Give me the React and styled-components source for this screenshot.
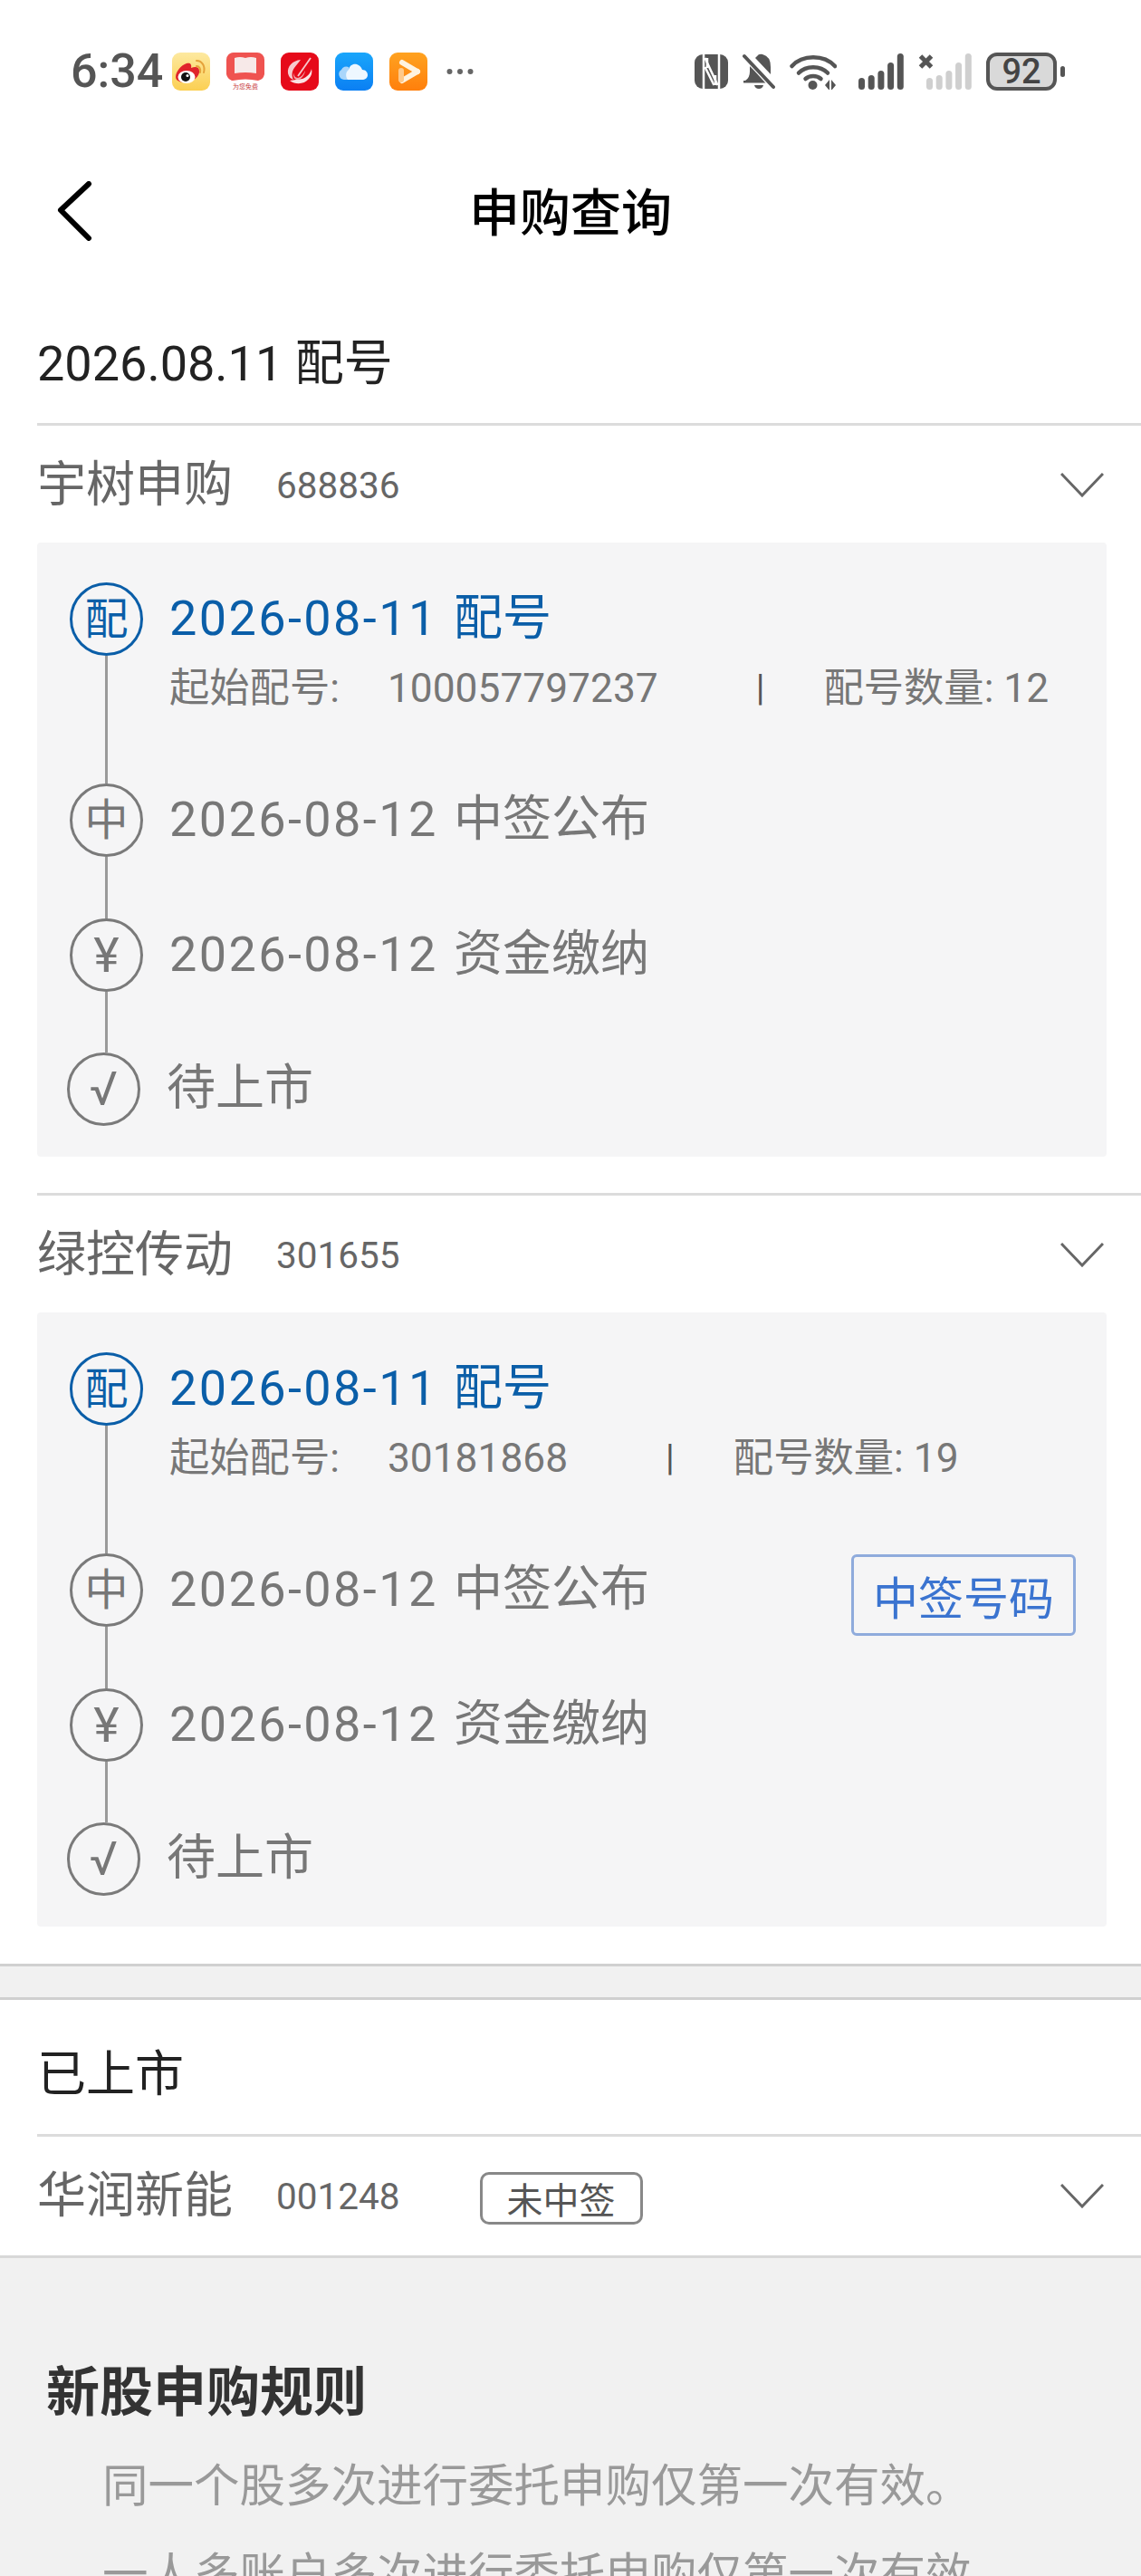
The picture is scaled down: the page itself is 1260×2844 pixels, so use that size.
import React from 'react';
import styled, { createGlobalStyle } from 'styled-components';

const GlobalStyle = createGlobalStyle`
  html, body {
    margin: 0;
    padding: 0;
    background: #fff;
  }
  body {
    font-family: Roboto, "Noto Sans CJK SC", sans-serif;
  }
`;

const Page = styled.div`
  width: 1260px;
  height: 2844px;
  overflow: hidden;
  background: #fff;
`;

const StatusBar = styled.div`
  display: flex;
  align-items: center;
  height: 42px;
  padding: 58px 84px 58px 78px;
`;

const Time = styled.span`
  font-size: 52px;
  font-weight: 500;
  line-height: 42px;
  color: #555;
  margin-right: 10px;
`;

const AppIcons = styled.div`
  display: flex;
  align-items: center;
  gap: 18px;
`;

const SystemIcons = styled.div`
  display: flex;
  align-items: center;
  gap: 16px;
  margin-left: auto;
`;

const Glyph = styled.svg`
  display: block;
  flex: none;
  margin-left: ${p => p.$left || 0}px;
`;

const Battery = styled.div`
  box-sizing: border-box;
  width: 78px;
  height: 42px;
  border: 4px solid #555;
  border-radius: 12px;
  background: #d9d9d9;
  color: #444;
  font-size: 38px;
  font-weight: 500;
  line-height: 34px;
  text-align: center;
`;

const BatteryTip = styled.div`
  width: 5px;
  height: 12px;
  border-radius: 3px;
  background: #555;
  margin-left: -12px;
`;

const Header = styled.div`
  display: grid;
  grid-template-columns: 1fr auto 1fr;
  align-items: center;
  height: 150px;
  padding-left: 62px;
`;

const Title = styled.h1`
  margin: 0;
  padding: 6px 62px 0 0;
  font-size: 56px;
  font-weight: 500;
  color: #000;
  line-height: 70px;
`;

const DateHeading = styled.div`
  box-sizing: border-box;
  height: 159px;
  padding: 63px 0 0 41px;
  font-size: 54px;
  line-height: 62px;
  color: #222;
`;

const Section = styled.section`
  margin: 0 0 40px 41px;
  border-top: 3px solid #dcdcdc;

  &:last-of-type {
    margin-bottom: 41px;
  }
`;

const StockRow = styled.div`
  display: flex;
  align-items: center;
  height: 121px;
  padding-bottom: 8px;
  padding-right: 41px;
`;

const StockName = styled.span`
  width: 264px;
  flex: none;
  font-size: 54px;
  color: #666;
`;

const StockCode = styled.span`
  margin-top: 10px;
  font-size: 40.5px;
  color: #666;
`;

const Chevron = styled.svg`
  display: block;
  margin: 10px 0 0 auto;
`;

const Card = styled.div`
  margin-right: 38px;
  padding: 44px 34px 34px 36px;
  background: #f5f5f6;
  border-radius: 4px;
`;

const Step = styled.div`
  display: flex;
  height: ${p => p.$height}px;
  margin-left: ${p => (p.$last ? -3 : 0)}px;
`;

const Rail = styled.div`
  display: flex;
  flex-direction: column;
  align-items: center;
  flex: none;
  width: 81px;
`;

const Circle = styled.div`
  box-sizing: border-box;
  flex: none;
  display: flex;
  align-items: center;
  justify-content: center;
  width: 81px;
  height: 81px;
  border: 3px solid ${p => (p.$active ? '#0a5ea8' : '#7a7a7a')};
  border-radius: 50%;
  color: ${p => (p.$active ? '#0a5ea8' : '#777')};
  font-size: ${p => p.$size || 48}px;
  line-height: 1;
`;

const RailLine = styled.div`
  flex: 1;
  width: 3px;
  background: #9a9a9a;
`;

const StepBody = styled.div`
  flex: 1;
  margin-left: 29px;
`;

const StepHead = styled.div`
  display: flex;
  justify-content: space-between;
  align-items: flex-start;
`;

const StepTitle = styled.div`
  font-size: 54px;
  line-height: 80px;
  color: ${p => (p.$active ? '#0a5ea8' : '#777')};
`;

const StepDate = styled.span`
  letter-spacing: 2.4px;
  margin-right: 4px;
`;

const LotButton = styled.div`
  box-sizing: border-box;
  display: flex;
  align-items: center;
  justify-content: center;
  width: 248px;
  height: 90px;
  margin-top: 1px;
  border: 3px solid #8fabdc;
  border-radius: 6px;
  color: #3b74d0;
  font-size: 50px;
`;

const SubLine = styled.div`
  display: flex;
  margin-top: 7px;
  font-size: 44.3px;
  line-height: 60px;
  color: #777;
`;

const SubNumber = styled.span`
  margin-left: 53px;
`;

const SubDivider = styled.span`
  margin: 0 65px 0 108px;
  color: #555;
  font-size: 40px;
`;

const Band = styled.div`
  box-sizing: border-box;
  height: 40px;
  background: #f1f1f1;
  border-top: 3px solid #d0d0d0;
  border-bottom: 3px solid #d0d0d0;
`;

const ListedHeading = styled.div`
  box-sizing: border-box;
  height: 148px;
  padding: 53px 0 0 41px;
  font-size: 54px;
  line-height: 60px;
  color: #222;
`;

const ListedWrap = styled.div`
  border-bottom: 3px solid #d8d8d8;
  padding-left: 41px;
`;

const ListedRow = styled(StockRow)`
  height: 121px;
  padding-bottom: 10px;
  border-top: 3px solid #dcdcdc;
`;

const ResultTag = styled.span`
  box-sizing: border-box;
  display: flex;
  align-items: center;
  justify-content: center;
  width: 180px;
  height: 58px;
  margin: 14px 0 0 88px;
  border: 3px solid #888;
  border-radius: 10px;
  color: #555;
  font-size: 40px;
`;

const Rules = styled.div`
  background: #f1f1f1;
  height: 400px;
  padding: 114px 30px 0 51px;
`;

const RulesTitle = styled.h2`
  margin: 0 0 19px;
  font-size: 59px;
  font-weight: 700;
  line-height: 70px;
  color: #333;
`;

const RuleLine = styled.p`
  margin: 0 0 0 62px;
  font-size: 50.5px;
  line-height: 98px;
  color: #999;
  white-space: nowrap;
`;

const WeiboIcon = () => (
  <Glyph width="42" height="42" viewBox="0 0 42 42">
    <defs>
      <linearGradient id="wb" x1="0" y1="0" x2="0" y2="1">
        <stop offset="0" stopColor="#fde9a0" />
        <stop offset="1" stopColor="#fbcf52" />
      </linearGradient>
    </defs>
    <rect width="42" height="42" rx="9" fill="url(#wb)" />
    <path d="M4 27c0-6 6-13 12-15 4-1 6 1 5 5 5-2 9-1 9 3 1 6-7 13-15 13-6 0-11-2-11-6z" fill="#e0242b" />
    <ellipse cx="16" cy="27" rx="9.500" ry="7" fill="#fff" />
    <circle cx="15" cy="27" r="5" fill="#111" />
    <circle cx="17" cy="25.500" r="1.500" fill="#fff" />
    <path d="M27 15c3 0 5 3 4 7M27 9c6 0 10 6 8 13" fill="none" stroke="#e5a13a" strokeWidth="2" strokeLinecap="round" />
  </Glyph>
);

const BookIcon = () => (
  <Glyph width="42" height="42" viewBox="0 0 42 42">
    <path d="M0 8a8 8 0 0 1 8-8h26a8 8 0 0 1 8 8v16a9 9 0 0 1-7 7q-14-3-28 0a9 9 0 0 1-7-7z" fill="#ef5350" />
    <path d="M9 6q6-2 12 0q6-2 12 0v17q-12-2-24 0z" fill="#f7e9e8" />
    <text x="21" y="40" textAnchor="middle" fontSize="7" fill="#c9413f" fontFamily="Noto Sans CJK SC, sans-serif">为您免费</text>
  </Glyph>
);

const SwirlIcon = () => (
  <Glyph width="42" height="42" viewBox="0 0 42 42">
    <rect width="42" height="42" rx="9" fill="#e60a1a" />
    <path d="M22 8C13 9 7 15 8 23c1 4 3 6 6 7-2-4-2-9 1-13 2-3 5-6 7-9z" fill="#f7c9cd" />
    <path d="M15 22c-1 3 1 6 4 6 4-1 6-4 8-8-1 6-5 10-9 10-3 0-5-4-3-8z" fill="#f2a8ae" />
    <path d="M10 31c7 5 16 4 21-2 3-3 4-7 3-11-1 5-5 9-10 11-5 1-10 1-14 2z" fill="#fbe3e4" />
    <path d="M33 6L19 26" stroke="#f7c9cd" strokeWidth="1.800" />
  </Glyph>
);

const CloudIcon = () => (
  <Glyph width="42" height="42" viewBox="0 0 42 42">
    <defs>
      <linearGradient id="cl" x1="0" y1="0" x2="0" y2="1">
        <stop offset="0" stopColor="#19a6fb" />
        <stop offset="1" stopColor="#0b7ff3" />
      </linearGradient>
    </defs>
    <rect width="42" height="42" rx="9" fill="url(#cl)" />
    <path d="M10 30a6 6 0 0 1-3-11 6 6 0 0 1 8-3v14z" fill="#a9d6fb" />
    <path d="M14 30c-3-4-2-9 1-11 1-5 5-7 9-6 3 1 5 3 6 6 4 0 6 3 6 6s-3 5-6 5z" fill="#eef7ff" />
  </Glyph>
);

const PlayIcon = () => (
  <Glyph width="42" height="42" viewBox="0 0 42 42">
    <defs>
      <linearGradient id="pl" x1="0" y1="0" x2="0" y2="1">
        <stop offset="0" stopColor="#ffa220" />
        <stop offset="1" stopColor="#ff7f0c" />
      </linearGradient>
    </defs>
    <rect width="42" height="42" rx="9" fill="url(#pl)" />
    <path d="M14 11l17 10" stroke="#fff3e0" strokeWidth="6" strokeLinecap="round" />
    <path d="M31 21L14 31" stroke="#fff3e0" strokeWidth="6" strokeLinecap="round" />
    <path d="M13 20v10" stroke="#ffc98a" strokeWidth="6" strokeLinecap="round" />
  </Glyph>
);

const MoreDots = () => (
  <Glyph width="30" height="8" viewBox="0 0 30 8" $left={3}>
    <circle cx="3.500" cy="4" r="3" fill="#666" />
    <circle cx="15" cy="4" r="3" fill="#666" />
    <circle cx="26.500" cy="4" r="3" fill="#666" />
  </Glyph>
);

const NfcIcon = () => (
  <Glyph width="37" height="38" viewBox="0 0 37 38">
    <rect width="37" height="38" rx="9" fill="#555" />
    <path d="M10 0v38M27 0v38" stroke="#fff" strokeWidth="2.500" />
    <path d="M14 4v11M23 34V23" stroke="#fff" strokeWidth="2.500" />
    <path d="M11.500 4l14 30" stroke="#fff" strokeWidth="2.500" />
    <path d="M11.500 14l10 20" stroke="#fff" strokeWidth="2.500" />
  </Glyph>
);

const MutedBell = () => (
  <Glyph width="36" height="40" viewBox="0 0 36 40">
    <path d="M3 30q5-3 5-10V14L26 30z" fill="#555" />
    <path d="M1 30h25v2.500H1z" fill="#555" />
    <path d="M14 5l2-2q2-3 6-2 9 2 9 14v8z" fill="#555" />
    <path d="M13 35h10q-1 4-5 4t-5-4z" fill="#555" />
    <path d="M3 3l31 34" stroke="#fff" strokeWidth="7" />
    <path d="M2 3l32 34" stroke="#555" strokeWidth="4" strokeLinecap="round" />
  </Glyph>
);

const WifiIcon = () => (
  <Glyph width="52" height="40" viewBox="0 0 52 40">
    <path d="M2.500 14C14 1 38 1 50 14" fill="none" stroke="#555" strokeWidth="4.500" strokeLinecap="round" />
    <path d="M10 21.500C18 13 34 13 42 21.500" fill="none" stroke="#555" strokeWidth="4.500" strokeLinecap="round" />
    <path d="M17.500 28C22 24 30 24 34.500 28" fill="none" stroke="#555" strokeWidth="4.500" strokeLinecap="round" />
    <circle cx="25.500" cy="35" r="5" fill="#555" />
    <path d="M39 35l5-6v12zM46 29l5 6-5 6z" fill="#555" />
  </Glyph>
);

const barTops = [27, 24, 19, 10, 0];

const SignalBars = ({ color }) => (
  <Glyph width="50" height="40" viewBox="0 0 50 40" $left={8}>
    {barTops.map((top, i) => (
      <rect key={top} x={i * 10.7} y={top} width="7" height={40 - top} rx="3.500" fill={color} />
    ))}
  </Glyph>
);

const NoSignal = () => (
  <Glyph width="59" height="40" viewBox="0 0 59 40">
    <path d="M2.500 3l12 12M14.500 3l-12 12" stroke="#555" strokeWidth="5" />
    <g transform="translate(9 0)">
      {barTops.map((top, i) => (
        <rect key={top} x={i * 10.7} y={top} width="7" height={40 - top} rx="3.500" fill="#cfcfcf" />
      ))}
    </g>
  </Glyph>
);

const BackArrow = () => (
  <svg width="40" height="66" viewBox="0 0 40 66" style={{ display: 'block' }}>
    <path d="M36 3L5 32l31 31" fill="none" stroke="#000" strokeWidth="6" strokeLinecap="round" strokeLinejoin="round" />
  </svg>
);

const ExpandArrow = () => (
  <Chevron width="48" height="27" viewBox="0 0 48 27">
    <path d="M1 1l23 24L47 1" fill="none" stroke="#666" strokeWidth="3" />
  </Chevron>
);

const stocks = [
  { name: '宇树申购', code: '688836', first: '100057797237', count: 12 },
  { name: '绿控传动', code: '301655', first: '30181868', count: 19, showLots: true },
];

const StockSection = ({ stock }) => (
  <Section>
    <StockRow>
      <StockName>{stock.name}</StockName>
      <StockCode>{stock.code}</StockCode>
      <ExpandArrow />
    </StockRow>
    <Card>
      <Step $height={222}>
        <Rail>
          <Circle $active>配</Circle>
          <RailLine />
        </Rail>
        <StepBody>
          <StepTitle $active>
            <StepDate>2026-08-11</StepDate> 配号
          </StepTitle>
          <SubLine>
            起始配号:
            <SubNumber>{stock.first}</SubNumber>
            <SubDivider>|</SubDivider>
            配号数量: {stock.count}
          </SubLine>
        </StepBody>
      </Step>
      <Step $height={149}>
        <Rail>
          <Circle>中</Circle>
          <RailLine />
        </Rail>
        <StepBody>
          <StepHead>
            <StepTitle>
              <StepDate>2026-08-12</StepDate> 中签公布
            </StepTitle>
            {stock.showLots && <LotButton>中签号码</LotButton>}
          </StepHead>
        </StepBody>
      </Step>
      <Step $height={148}>
        <Rail>
          <Circle $size={54}>¥</Circle>
          <RailLine />
        </Rail>
        <StepBody>
          <StepTitle>
            <StepDate>2026-08-12</StepDate> 资金缴纳
          </StepTitle>
        </StepBody>
      </Step>
      <Step $height={81} $last>
        <Rail>
          <Circle $size={52}>√</Circle>
        </Rail>
        <StepBody>
          <StepTitle>待上市</StepTitle>
        </StepBody>
      </Step>
    </Card>
  </Section>
);

export default function App() {
  return (
    <Page>
      <GlobalStyle />
      <StatusBar>
        <Time>6:34</Time>
        <AppIcons>
          <WeiboIcon />
          <BookIcon />
          <SwirlIcon />
          <CloudIcon />
          <PlayIcon />
          <MoreDots />
        </AppIcons>
        <SystemIcons>
          <NfcIcon />
          <MutedBell />
          <WifiIcon />
          <SignalBars color="#555" />
          <NoSignal />
          <Battery>92</Battery>
          <BatteryTip />
        </SystemIcons>
      </StatusBar>
      <Header>
        <BackArrow />
        <Title>申购查询</Title>
      </Header>
      <DateHeading>2026.08.11 配号</DateHeading>
      {stocks.map(s => (
        <StockSection key={s.code} stock={s} />
      ))}
      <Band />
      <ListedHeading>已上市</ListedHeading>
      <ListedWrap>
        <ListedRow>
          <StockName>华润新能</StockName>
          <StockCode>001248</StockCode>
          <ResultTag>未中签</ResultTag>
          <ExpandArrow />
        </ListedRow>
      </ListedWrap>
      <Rules>
        <RulesTitle>新股申购规则</RulesTitle>
        <RuleLine>同一个股多次进行委托申购仅第一次有效。</RuleLine>
        <RuleLine>一人多账户多次进行委托申购仅第一次有效。</RuleLine>
      </Rules>
    </Page>
  );
}
